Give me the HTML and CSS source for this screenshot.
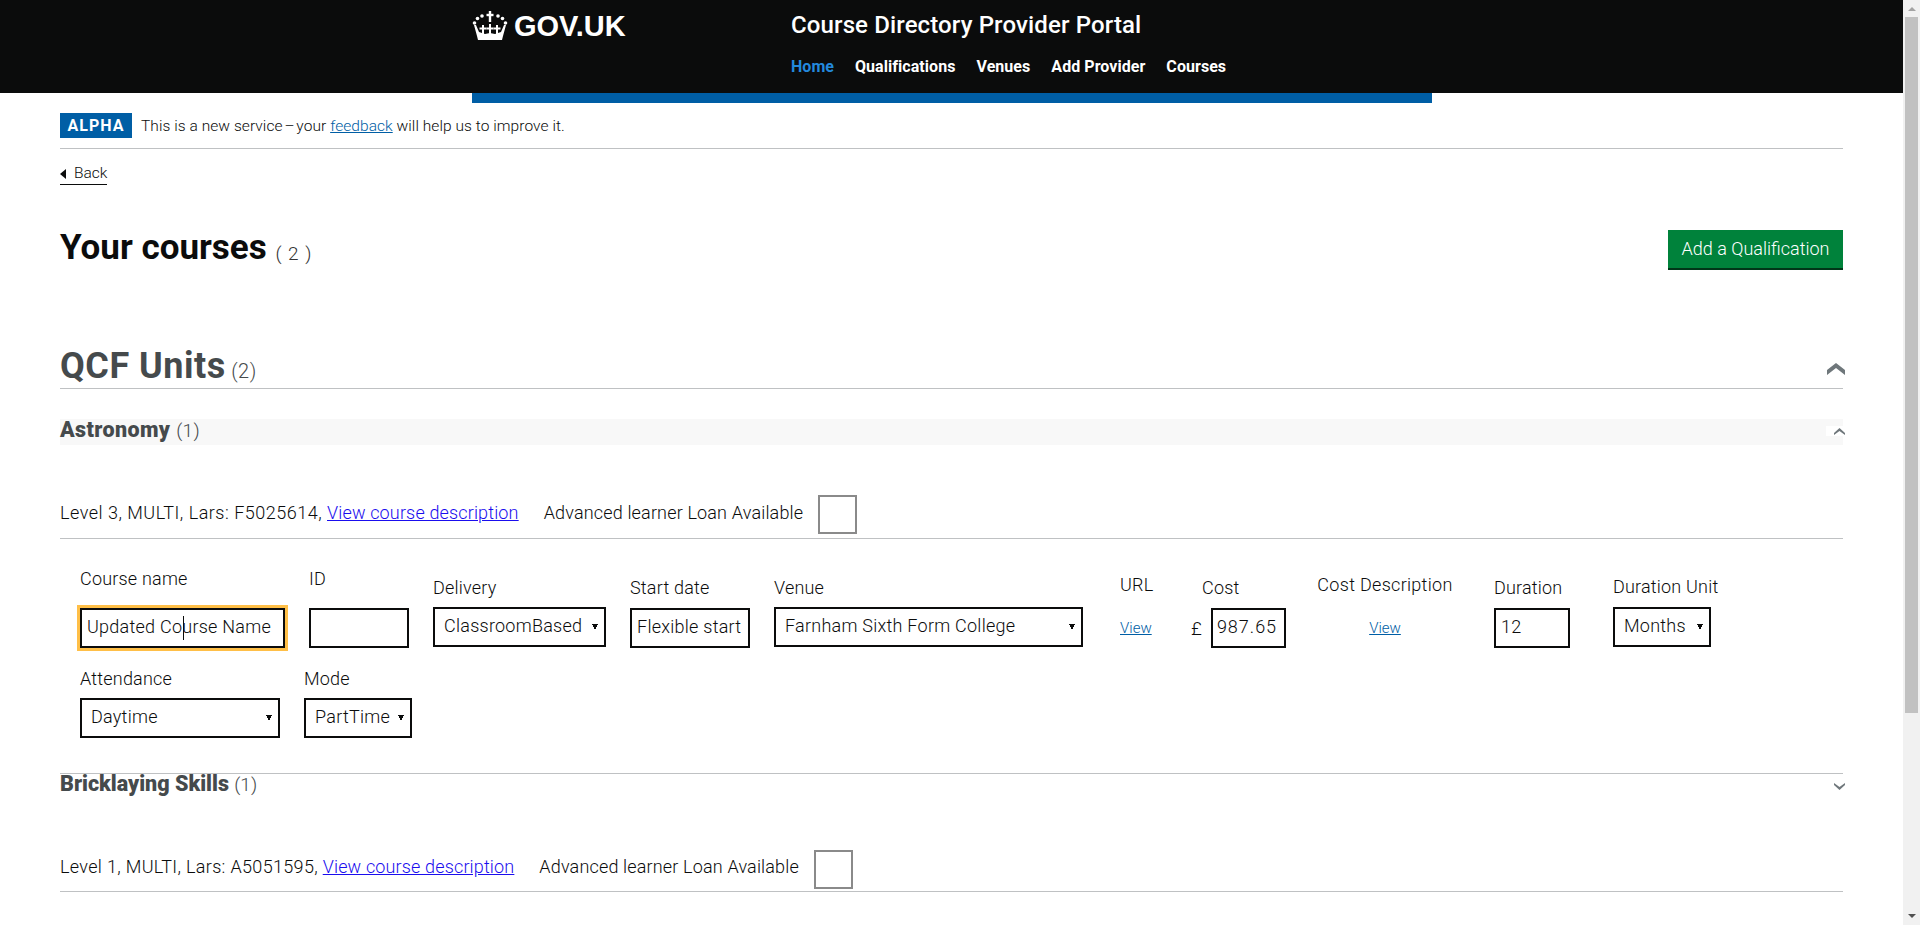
FILE: index.html
```html
<!DOCTYPE html>
<html lang="en">
<head>
  <meta charset="UTF-8">
  <title>Course Directory Provider Portal</title>
  <link rel="stylesheet" href="styles.css">
</head>
<body>

<header class="site-header">
  <div class="header-inner">
    <a class="logo" href="#">
      <svg class="crown" viewBox="0 0 36 30" aria-hidden="true">
        <g fill="#fff">
          <rect x="16.800" y="0" width="2.400" height="11"/>
          <rect x="14.500" y="2.800" width="7" height="2.400"/>
          <circle cx="2.500" cy="12" r="1.800"/>
          <circle cx="5.500" cy="7.500" r="1.800"/>
          <circle cx="10" cy="5" r="1.800"/>
          <circle cx="26" cy="5" r="1.800"/>
          <circle cx="30.500" cy="7.500" r="1.800"/>
          <circle cx="33.500" cy="12" r="1.800"/>
          <rect x="10" y="14" width="2" height="9"/>
          <rect x="7.500" y="16.500" width="7" height="2"/>
          <rect x="17" y="13" width="2" height="10"/>
          <rect x="14.500" y="16.500" width="7" height="2"/>
          <rect x="24" y="14" width="2" height="9"/>
          <rect x="21.500" y="16.500" width="7" height="2"/>
          <path d="M2 14l2 0 3 7 6 2 5-1 5 1 6-2 3-7 2 0-3 11-1 4H6l-1-4z"/>
        </g>
      </svg>
      <span class="logo-text">GOV.UK</span>
    </a>
    <div class="header-right">
      <div class="portal-title">Course Directory Provider Portal</div>
      <nav class="nav">
        <a class="active" href="#">Home</a>
        <a href="#">Qualifications</a>
        <a href="#">Venues</a>
        <a href="#">Add Provider</a>
        <a href="#">Courses</a>
      </nav>
    </div>
  </div>
</header>
<div class="blue-bar"></div>

<main class="main">
  <div class="phase">
    <strong class="phase-tag">ALPHA</strong>
    <span>This is a new service <span class="dash">–</span> your <a href="#">feedback</a> will help us to improve it.</span>
  </div>

  <a class="back" href="#">Back</a>

  <div class="title-row">
    <h1>Your courses <small>( 2 )</small></h1>
    <a class="button" href="#">Add a Qualification</a>
  </div>

  <h2 class="group-title">
    <span>QCF Units</span> <small>(2)</small>
    <svg class="chev-big" viewBox="0 0 18 12"><path d="M0 12V7L9 0l9 7v5L9 5z"/></svg>
  </h2>

  <h3 class="sub-title sub-open">
    <span><b>Astronomy</b> <small>(1)</small></span>
    <svg class="chev-small" viewBox="0 0 19 10"><path d="M8 9V7l5.500-5L19 7v2l-5.500-4z"/></svg>
  </h3>

  <div class="course-line first-line">
    <span class="course-text">Level 3, MULTI, Lars: F5025614, <a href="#">View course description</a></span>
    <label class="loan">Advanced learner Loan Available <input type="checkbox"></label>
  </div>

  <form class="course-form">
    <div class="field f-name high"><label>Course name</label><input class="focused" type="text" value="Updated Course Name"><i class="caret"></i></div>
    <div class="field f-id high"><label>ID</label><input type="text"></div>
    <div class="field f-delivery"><label>Delivery</label><select><option>ClassroomBased</option></select></div>
    <div class="field f-start"><label>Start date</label><input type="text" value="Flexible start"></div>
    <div class="field f-venue"><label>Venue</label><select><option>Farnham Sixth Form College</option></select></div>
    <div class="field f-url mid"><label>URL</label><a href="#">View</a></div>
    <div class="field f-cost"><label>Cost</label><div class="cost-box"><span>£</span><input type="text" value="987.65"></div></div>
    <div class="field f-desc mid"><label>Cost Description</label><a href="#">View</a></div>
    <div class="field f-duration"><label>Duration</label><input type="text" value="12"></div>
    <div class="field f-unit"><label>Duration Unit</label><select><option>Months</option></select></div>
    <div class="field f-attendance"><label>Attendance</label><select><option>Daytime</option></select></div>
    <div class="field f-mode"><label>Mode</label><select><option>PartTime</option></select></div>
  </form>

  <h3 class="sub-title sub-closed">
    <span><b>Bricklaying Skills</b> <small>(1)</small></span>
    <svg class="chev-down" viewBox="0 0 11 7"><path d="M0 0v2l5.500 5L11 2V0L5.500 4z"/></svg>
  </h3>

  <div class="course-line second-line">
    <span class="course-text">Level 1, MULTI, Lars: A5051595, <a href="#">View course description</a></span>
    <label class="loan">Advanced learner Loan Available <input type="checkbox"></label>
  </div>
</main>

<div class="scrollbar">
  <div class="scroll-up"></div>
  <div class="scroll-thumb"></div>
  <div class="scroll-down"></div>
</div>

</body>
</html>
```

FILE: styles.css
```css
html, body {
  height: 100%;
  overflow: hidden;
}
body {
  margin: 0;
  font-family: "Roboto", "Liberation Sans", sans-serif;
  font-weight: 300;
  font-size: 19px;
  color: #0b0c0c;
  background: #fff;
}
a {
  color: #005ea5;
}

/* header */
.site-header {
  background: #0b0c0c;
  height: 93px;
}
.header-inner {
  display: flex;
  margin-left: 472px;
}
.logo {
  display: flex;
  align-items: center;
  width: 319px;
  height: 52px;
  color: #fff;
  text-decoration: none;
}
.crown {
  width: 36px;
  height: 30px;
  margin-right: 6px;
}
.logo-text {
  font-family: "Liberation Sans", sans-serif;
  font-size: 29px;
  font-weight: 700;
}
.portal-title {
  color: #fff;
  font-size: 24px;
  font-weight: 500;
  letter-spacing: .13px;
  line-height: 27px;
  padding-top: 12px;
}
.nav {
  display: flex;
  gap: 21px;
  margin-top: 18px;
}
.nav a {
  color: #fff;
  font-size: 16px;
  font-weight: 700;
  letter-spacing: .05px;
  line-height: 20px;
  text-decoration: none;
}
.nav a.active {
  color: #2389dc;
}
.blue-bar {
  background: #005ea5;
  height: 10px;
  width: 960px;
  margin-left: 472px;
}

/* main column */
.main {
  margin: 0 77px 0 60px;
}
.phase {
  display: flex;
  align-items: center;
  gap: 9px;
  height: 45px;
  border-bottom: 1px solid #bfc1c3;
  font-size: 15.500px;
  letter-spacing: .06px;
}
.dash {
  margin: 0 -2px;
}
.phase-tag {
  background: #005ea5;
  color: #fff;
  font-size: 16px;
  font-weight: 700;
  letter-spacing: 1px;
  width: 72px;
  height: 25px;
  line-height: 25px;
  text-align: center;
}
.back {
  display: inline-block;
  margin-top: 14px;
  padding-left: 14px;
  color: #0b0c0c;
  font-size: 15.500px;
  line-height: 21px;
  text-decoration: none;
  border-bottom: 1px solid #0b0c0c;
  position: relative;
}
.back::before {
  content: "";
  position: absolute;
  left: 0;
  top: 6px;
  border-style: solid;
  border-width: 5px 6px 5px 0;
  border-color: transparent #0b0c0c transparent transparent;
}
.title-row {
  display: flex;
  justify-content: space-between;
  align-items: flex-start;
  margin-top: 45px;
  height: 110px;
}
h1 {
  margin: -2px 0 0;
  font-size: 35px;
  font-weight: 700;
  line-height: 40px;
}
h1 small {
  font-size: 19px;
  font-weight: 300;
  letter-spacing: 1px;
  color: #333;
  vertical-align: -1px;
}
.button {
  background: #00823b;
  color: #fff;
  font-size: 18px;
  line-height: 38px;
  width: 175px;
  height: 38px;
  text-align: center;
  text-decoration: none;
  border-bottom: 2px solid #003618;
}
.group-title {
  margin: 0;
  height: 48px;
  color: #454a4c;
  font-size: 36px;
  font-weight: 700;
  letter-spacing: .5px;
  line-height: 52px;
  border-bottom: 1px solid #bfc1c3;
  position: relative;
}
.group-title small {
  font-size: 20px;
  font-weight: 300;
  margin-left: -4px;
}
.chev-big, .chev-small, .chev-down {
  position: absolute;
  fill: #6f777b;
}
.chev-big {
  right: -2px;
  top: 23px;
  width: 18px;
  height: 12px;
}
.sub-title {
  margin: 0;
  color: #454a4c;
  font-size: 21.500px;
  font-weight: 700;
  position: relative;
}
.sub-title small {
  font-size: 19px;
  font-weight: 300;
}
.sub-open {
  background: #f8f8f8;
  margin-top: 30px;
  height: 26px;
  line-height: 21px;
  letter-spacing: .4px;
}
.chev-small {
  right: -2px;
  top: 7px;
  width: 19px;
  height: 10px;
  background: #fff;
}
.sub-closed {
  border-top: 1px solid #bfc1c3;
  margin-top: 34px;
  height: 26px;
  line-height: 20px;
}
.chev-down {
  right: -2px;
  top: 9px;
  width: 11px;
  height: 7px;
}
.course-line {
  display: flex;
  align-items: flex-start;
  gap: 25px;
  border-bottom: 1px solid #bfc1c3;
  font-size: 18px;
}
.first-line {
  margin-top: 50px;
  height: 43px;
  line-height: 35px;
}
.second-line {
  margin-top: 50px;
  height: 41px;
  line-height: 33px;
}
.course-text {
  letter-spacing: .5px;
}
.second-line .course-text {
  letter-spacing: .33px;
}
.course-text a {
  color: #1a0dee;
  letter-spacing: .15px;
}
.loan {
  display: flex;
  align-items: flex-start;
  gap: 15px;
  letter-spacing: .16px;
}
.loan input {
  appearance: none;
  width: 39px;
  height: 39px;
  margin: 0;
  border: 2px solid #8a8a8a;
  background: #fff;
}

/* course form */
.course-form {
  display: flex;
  flex-wrap: wrap;
  align-items: flex-end;
  padding-left: 20px;
  row-gap: 20px;
  margin-top: 29px;
}
.field {
  display: flex;
  flex-direction: column;
  margin-right: 20px;
  position: relative;
}
.field label {
  font-size: 18px;
  letter-spacing: .2px;
  line-height: 22px;
  margin-bottom: 9px;
  white-space: nowrap;
}
.field.high label {
  margin-bottom: 18px;
}
.field.mid label {
  margin-bottom: 12px;
}
.f-delivery label, .f-venue label, .f-attendance label, .f-mode label {
  margin-bottom: 8px;
}
.field input[type=text], .field select {
  box-sizing: border-box;
  height: 40px;
  border: 2px solid #0b0c0c;
  border-radius: 0;
  background-color: #fff;
  padding: 0 5px 3px;
  font-family: inherit;
  font-weight: 300;
  font-size: 18px;
  letter-spacing: .25px;
  color: #0b0c0c;
}
.field select {
  appearance: none;
  margin-bottom: 1px;
  padding-left: 9px;
  background-image:
    linear-gradient(to top right, transparent 50%, #0b0c0c 50%),
    linear-gradient(to top left, transparent 50%, #0b0c0c 50%);
  background-size: 3px 6px;
  background-position: right 9px center, right 6px center;
  background-repeat: no-repeat;
}
.field input.focused {
  outline: 3px solid #ffbf47;
}
.caret {
  position: absolute;
  left: 103px;
  bottom: 8px;
  width: 1px;
  height: 24px;
  background: #0b0c0c;
}
.field > a {
  font-size: 15px;
  line-height: 40px;
}
.f-name { width: 205px; margin-right: 24px; }
.f-id { width: 100px; margin-right: 24px; }
.f-delivery { width: 173px; margin-right: 24px; }
.f-start { width: 120px; margin-right: 24px; }
.f-start input { letter-spacing: .4px; }
.f-venue { width: 309px; margin-right: 37px; }
.f-url { width: 40px; margin-right: 31px; }
.f-cost { width: 95px; margin-right: 26px; }
.f-desc { width: 146px; margin-right: 36px; align-items: center; }
.f-desc label { letter-spacing: .3px; }
.f-duration { width: 76px; margin-right: 43px; }
.f-unit { width: 98px; margin-right: 0; }
.f-attendance { width: 200px; margin-right: 24px; }
.f-mode { width: 108px; }
.f-cost label { padding-left: 11px; }
.cost-box {
  display: flex;
  align-items: center;
  gap: 9px;
}
.field input, .field select {
  width: 100%;
}
.field .cost-box input {
  flex: none;
  width: 75px;
  padding: 0 4px 3px;
  letter-spacing: 1px;
}

/* browser scrollbar */
.scrollbar {
  position: fixed;
  top: 0;
  right: 0;
  bottom: 0;
  width: 17px;
  background: #f1f1f1;
}
.scroll-thumb {
  position: absolute;
  top: 17px;
  left: 2px;
  width: 13px;
  height: 696px;
  background: #c1c1c1;
}
.scroll-up, .scroll-down {
  position: absolute;
  left: 5px;
  border-style: solid;
  border-color: transparent;
}
.scroll-up {
  top: 7px;
  border-width: 0 4px 4px 4px;
  border-bottom-color: #a3a3a3;
}
.scroll-down {
  bottom: 7px;
  border-width: 4px 4px 0 4px;
  border-top-color: #505050;
}
```
